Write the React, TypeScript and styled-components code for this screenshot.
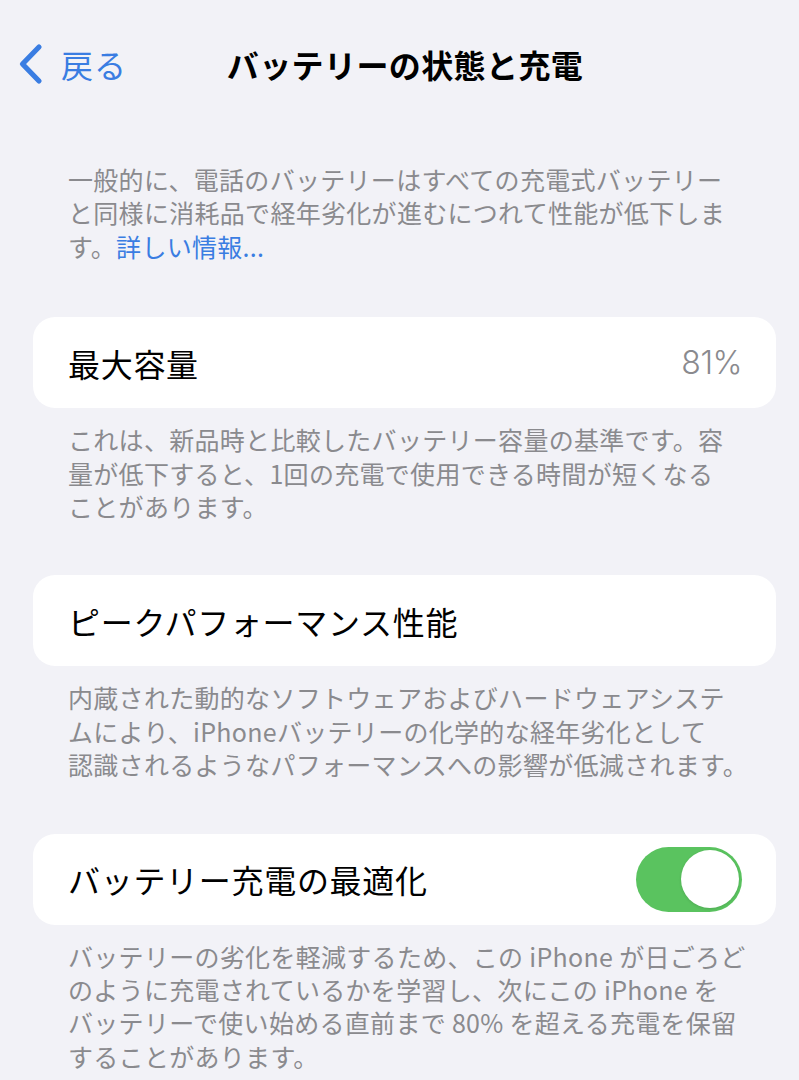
import React from 'react';
import styled, { createGlobalStyle } from 'styled-components';

const GlobalStyle = createGlobalStyle`
  html, body {
    margin: 0;
    padding: 0;
    background: #f2f2f7;
  }
  body {
    font-family: "Noto Sans CJK JP", "Noto Sans", "Liberation Sans", sans-serif;
    -webkit-font-smoothing: antialiased;
  }
`;

const Page = styled.div`
  width: 799px;
  min-height: 1080px;
  background: #f2f2f7;
  overflow: hidden;
`;

const NavBar = styled.header`
  height: 128px;
  display: grid;
  grid-template-columns: 1fr auto 1fr;
  align-items: center;
`;

const BackButton = styled.button`
  display: flex;
  align-items: center;
  gap: 17px;
  padding: 0 0 0 18px;
  border: none;
  background: none;
  color: #3a7de2;
  font-family: inherit;
  font-size: 32px;
  line-height: 1;
  letter-spacing: 1px;
  cursor: pointer;
  justify-self: start;
`;

const Title = styled.h1`
  margin: 0;
  padding-left: 11px;
  font-size: 32px;
  font-weight: 700;
  color: #000;
  letter-spacing: 0.4px;
`;

const Content = styled.main`
  padding: 35px 0 0;
`;

const Note = styled.p<{ $top?: number }>`
  margin: ${(p) => p.$top ?? 15}px 0 0;
  padding: 0 40px 0 68px;
  font-size: 25px;
  line-height: 33.4px;
  letter-spacing: 0.3px;
  color: #8a8a8e;
  white-space: nowrap;
`;

const Link = styled.a`
  color: #3a7de2;
  text-decoration: none;
`;

const Card = styled.section<{ $top: number }>`
  margin: ${(p) => p.$top}px 23px 0 33px;
  height: 91px;
  padding: 0 34px 0 35px;
  background: #fff;
  border-radius: 22px;
  display: flex;
  align-items: center;
  justify-content: space-between;
`;

const Label = styled.span`
  font-size: 32px;
  color: #000;
  letter-spacing: 0.7px;
`;

const Value = styled.span`
  font-family: "Inter", "Noto Sans", sans-serif;
  font-size: 32px;
  font-weight: 300;
  color: #8a8a8e;
  letter-spacing: -0.5px;
`;

const Toggle = styled.div<{ $on: boolean }>`
  width: 106px;
  height: 65px;
  border-radius: 33px;
  background: ${(p) => (p.$on ? '#5ac35f' : '#e9e9ea')};
  display: flex;
  align-items: center;
  justify-content: ${(p) => (p.$on ? 'flex-end' : 'flex-start')};
  padding: 0 3px;
  box-sizing: border-box;
`;

const Knob = styled.div`
  width: 58px;
  height: 58px;
  border-radius: 50%;
  background: #fff;
  box-shadow: 0 1px 3px rgba(0, 0, 0, 0.12);
`;

const Chevron = () => (
  <svg width="26" height="42" viewBox="0 0 26 42" fill="none">
    <polyline
      points="21,4 4.5,21 21,38"
      stroke="#3a7de2"
      strokeWidth="5.2"
      strokeLinecap="round"
      strokeLinejoin="round"
    />
  </svg>
);

export default function App() {
  return (
    <Page>
      <GlobalStyle />
      <NavBar>
        <BackButton>
          <Chevron />
          <span>戻る</span>
        </BackButton>
        <Title>バッテリーの状態と充電</Title>
        <div />
      </NavBar>
      <Content>
        <Note $top={0}>
          一般的に、電話のバッテリーはすべての充電式バッテリー
          <br />
          と同様に消耗品で経年劣化が進むにつれて性能が低下しま
          <br />
          す。<Link>詳しい情報...</Link>
        </Note>

        <Card $top={54}>
          <Label>最大容量</Label>
          <Value>81%</Value>
        </Card>
        <Note>
          これは、新品時と比較したバッテリー容量の基準です。容
          <br />
          量が低下すると、1回の充電で使用できる時間が短くなる
          <br />
          ことがあります。
        </Note>

        <Card $top={52}>
          <Label>ピークパフォーマンス性能</Label>
        </Card>
        <Note>
          内蔵された動的なソフトウェアおよびハードウェアシステ
          <br />
          ムにより、iPhoneバッテリーの化学的な経年劣化として
          <br />
          認識されるようなパフォーマンスへの影響が低減されます。
        </Note>

        <Card $top={52}>
          <Label>バッテリー充電の最適化</Label>
          <Toggle $on>
            <Knob />
          </Toggle>
        </Card>
        <Note>
          バッテリーの劣化を軽減するため、この iPhone が日ごろど
          <br />
          のように充電されているかを学習し、次にこの iPhone を
          <br />
          バッテリーで使い始める直前まで 80% を超える充電を保留
          <br />
          することがあります。
        </Note>
      </Content>
    </Page>
  );
}
